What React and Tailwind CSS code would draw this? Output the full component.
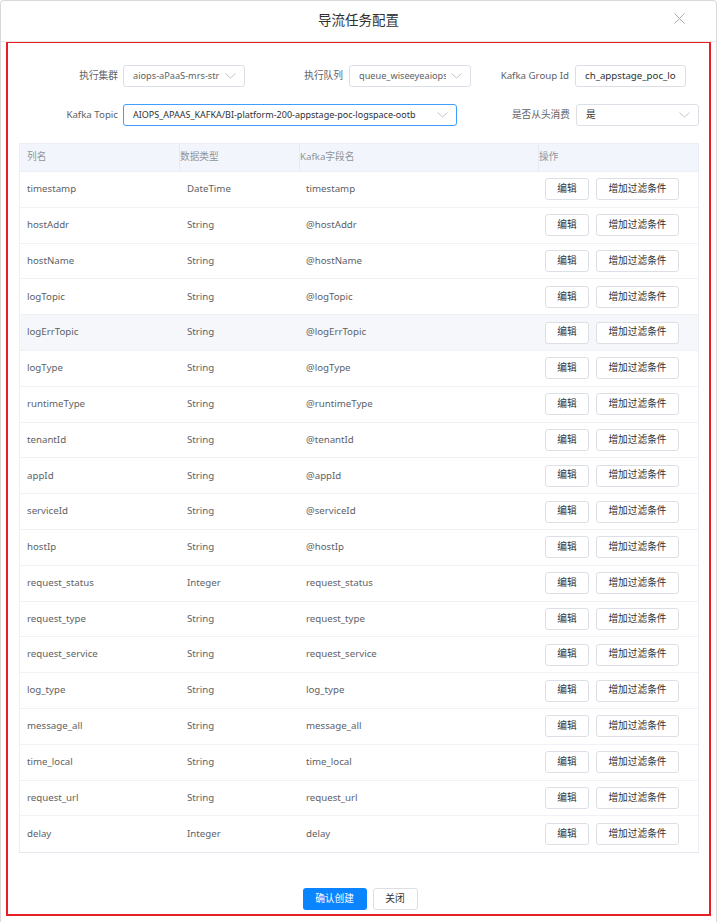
import React from "react";

const rows = [
  ["timestamp", "DateTime", "timestamp"],
  ["hostAddr", "String", "@hostAddr"],
  ["hostName", "String", "@hostName"],
  ["logTopic", "String", "@logTopic"],
  ["logErrTopic", "String", "@logErrTopic"],
  ["logType", "String", "@logType"],
  ["runtimeType", "String", "@runtimeType"],
  ["tenantId", "String", "@tenantId"],
  ["appId", "String", "@appId"],
  ["serviceId", "String", "@serviceId"],
  ["hostIp", "String", "@hostIp"],
  ["request_status", "Integer", "request_status"],
  ["request_type", "String", "request_type"],
  ["request_service", "String", "request_service"],
  ["log_type", "String", "log_type"],
  ["message_all", "String", "message_all"],
  ["time_local", "String", "time_local"],
  ["request_url", "String", "request_url"],
  ["delay", "Integer", "delay"],
];

const Chevron = () => (
  <svg width="11" height="6" viewBox="0 0 11 6" fill="none" className="shrink-0">
    <polyline points="0.5,0.5 5.5,5 10.5,0.5" stroke="#c0c4cc" strokeWidth="1" />
  </svg>
);

const Select = ({ value, width, focused, dark, size = "" }) => (
  <div
    className={`flex items-center h-[22px] rounded-[3px] border bg-white pl-[9px] pr-[8px] ${width} ${
      focused ? "border-[#409eff]" : "border-[#dcdfe6]"
    }`}
  >
    <span
      className={`flex-1 overflow-hidden whitespace-nowrap ${size} ${
        dark ? "text-[#303133]" : "text-[#606266]"
      }`}
    >
      {value}
    </span>
    <span className="pl-[5px]">
      <Chevron />
    </span>
  </div>
);

const Label = ({ children, width }) => (
  <div className={`text-right text-[#606266] ${width}`}>{children}</div>
);

export default function App() {
  return (
    <div
      className="w-[717px] h-[922px] bg-white text-[9.7px] relative"
      style={{ fontFamily: '"Noto Sans", "Noto Sans CJK SC", sans-serif' }}
    >
      <div className="h-full rounded-t-[4px] border-x border-t border-[#d9d9d9] flex flex-col">
        {/* header */}
        <div className="h-[41px] shrink-0 flex items-center justify-center relative border-b border-[#e8e8e8]">
          <span className="text-[13.5px] text-[#303133] -mt-[1px]">导流任务配置</span>
          <span className="absolute right-[31px] top-[12px]">
            <svg width="11" height="11" viewBox="0 0 11 11">
              <path d="M0.5 0.5 L10.5 10.5 M10.5 0.5 L0.5 10.5" stroke="#a8abb2" strokeWidth="1" />
            </svg>
          </span>
        </div>

        {/* annotated body */}
        <div className="mx-[5px] mb-[6px] -mt-[1px] flex-1 border-2 border-[#e81e25] flex flex-col">
          <div className="pt-[22px] flex flex-col gap-[17px]">
            <div className="flex items-center">
              <Label width="w-[110px]">执行集群</Label>
              <div className="ml-[5px]">
                <Select value="aiops-aPaaS-mrs-str" width="w-[122px]" size="text-[9.2px]" />
              </div>
              <Label width="w-[98px]">执行队列</Label>
              <div className="ml-[6px]">
                <Select value="queue_wiseeyeaiops" width="w-[122px]" size="text-[9.2px]" />
              </div>
              <Label width="w-[98px]">Kafka Group Id</Label>
              <div className="ml-[6px] h-[22px] w-[111px] rounded-[3px] border border-[#dcdfe6] pl-[9px] pr-[4px] flex items-center overflow-hidden whitespace-nowrap text-[#303133]">
                ch_appstage_poc_lo
              </div>
            </div>
            <div className="flex items-center">
              <Label width="w-[110px]">Kafka Topic</Label>
              <div className="ml-[5px]">
                <Select
                  value="AIOPS_APAAS_KAFKA/BI-platform-200-appstage-poc-logspace-ootb"
                  width="w-[334px]"
                  focused
                  dark
                  size="text-[9px]"
                />
              </div>
              <Label width="w-[113px]">是否从头消费</Label>
              <div className="ml-[6px]">
                <Select value="是" width="w-[123px]" dark />
              </div>
            </div>
          </div>

          {/* table */}
          <div className="mt-[17px] ml-[11px] w-[680px] border border-[#ebeef5] border-b-[#e4e7ed]">
            <div className="flex h-[28px] bg-[#f2f6fc] text-[#909399] border-b border-[#ebeef5]">
              <div className="w-[159px] pl-[7px] flex items-center">列名</div>
              <div className="w-[120px] border-l border-[#e6ebf3] flex items-center">数据类型</div>
              <div className="w-[239px] border-l border-[#e6ebf3] flex items-center">Kafka字段名</div>
              <div className="flex-1 border-l border-[#e6ebf3] flex items-center">操作</div>
            </div>
            {rows.map((r, i) => (
              <div
                key={r[0]}
                className={`flex items-center h-[35.8px] text-[#606266] ${
                  i < rows.length - 1 ? "border-b border-[#f0f2f6]" : ""
                } ${i === 4 ? "bg-[#f5f7fa]" : ""}`}
              >
                <div className="w-[159px] pl-[7px]">{r[0]}</div>
                <div className="w-[120px] pl-[8px]">{r[1]}</div>
                <div className="w-[239px] pl-[7px]">{r[2]}</div>
                <div className="flex-1 pl-[7px] flex gap-[7px]">
                  <button className="w-[44px] h-[22px] rounded-[3px] border border-[#dcdfe6] bg-white text-[#303133]">
                    编辑
                  </button>
                  <button className="w-[83px] h-[22px] rounded-[3px] border border-[#dcdfe6] bg-white text-[#303133]">
                    增加过滤条件
                  </button>
                </div>
              </div>
            ))}
          </div>

          {/* footer */}
          <div className="flex-1" />
          <div className="flex justify-center gap-[6px] pb-[4px] pl-[3px]">
            <button className="w-[64px] h-[22px] rounded-[3px] bg-[#0a84ff] text-white">确认创建</button>
            <button className="w-[45px] h-[22px] rounded-[3px] border border-[#dcdfe6] bg-white text-[#303133]">
              关闭
            </button>
          </div>
        </div>
      </div>
    </div>
  );
}
